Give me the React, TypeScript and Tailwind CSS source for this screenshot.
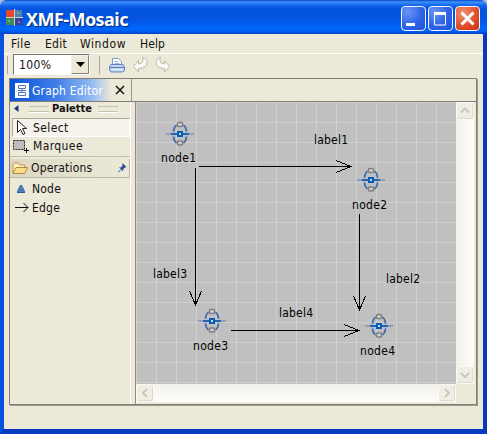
import React from "react";

const GRID =
  "bg-[#c0c0c0] bg-[linear-gradient(to_right,#cfcfcf_1px,transparent_1px),linear-gradient(to_bottom,#cfcfcf_1px,transparent_1px)] bg-[size:20px_20px]";

function CaptionButton({ kind }: { kind: "min" | "max" | "close" }) {
  const tone =
    kind === "close"
      ? "bg-[radial-gradient(circle_at_30%_25%,#ee9172,#e2512b_55%,#c5300c)]"
      : "bg-[radial-gradient(circle_at_25%_20%,#6a95f3,#2f63e6_55%,#1c54e0)]";
  return (
    <div className={`h-[25px] w-[25px] shrink-0 rounded-[4px] border border-[#f3f6ff] ${tone}`}>
      <svg width="23" height="23" viewBox="0 0 23 23" fill="none" stroke="#fff">
        {kind === "min" && <path d="M4 17.5h9" strokeWidth="3" />}
        {kind === "max" && (
          <>
            <path d="M5.5 6v12h11V6" strokeWidth="1" />
            <path d="M5 6.5h12" strokeWidth="3" />
          </>
        )}
        {kind === "close" && <path d="M5.5 5.5l12 12M17.5 5.5l-12 12" strokeWidth="3" />}
      </svg>
    </div>
  );
}

function TitleBar() {
  return (
    <div className="flex h-[34px] shrink-0 items-start rounded-t-[7px] bg-[linear-gradient(to_bottom,#0b47c8_0px,#3c92fb_2px,#1668ee_5px,#0254df_9px,#0355e2_20px,#0066fc_28px,#0061f5_31px,#003dc4_34px)] pl-[6px] pr-[7px] pt-[6px]">
      <svg width="17" height="17" viewBox="0 0 17 17" className="mt-[3px] shrink-0">
        <path d="M0 1h8v7H0z" fill="#e8452c" />
        <path d="M9 1h7v7H9z" fill="#4d82a8" />
        <path d="M0 9h8v7H0z" fill="#3d8c50" />
        <path d="M9 9h7v7H9z" fill="#3d3b92" />
        <path d="M8.500 0v17M0 8.500h17" stroke="#c3d4e0" />
        <path d="M11 3h2v2h-2zM2 11h2v2H2zM12 12h2v2h-2z" fill="#9dbbd0" opacity=".6" />
      </svg>
      <div className="ml-[3px] mt-[1px] grow whitespace-nowrap font-['Noto_Sans',sans-serif] text-[18px] font-bold leading-[25px] tracking-[-0.55px] text-white [text-shadow:1px_1px_1px_#0a2a7a]">
        XMF-Mosaic
      </div>
      <div className="flex gap-[2px]">
        <CaptionButton kind="min" />
        <CaptionButton kind="max" />
        <CaptionButton kind="close" />
      </div>
    </div>
  );
}

function MenuBar() {
  return (
    <div className="flex h-[20px] shrink-0 border-b border-white pl-[7px] pt-px leading-[19px]">
      <span className="w-[34px] tracking-[0.5px]">File</span>
      <span className="w-[35px] tracking-[0.3px]">Edit</span>
      <span className="w-[60px] tracking-[0.6px]">Window</span>
      <span className="tracking-[0.1px]">Help</span>
    </div>
  );
}

function Toolbar() {
  return (
    <div className="flex h-[24px] shrink-0 items-start pl-[2px]">
      <div className="mt-[2px] h-[18px] w-[2px] border-r border-[#aca899]" />
      <div className="ml-[5px] flex h-[21px] w-[77px] border border-r-white border-b-white border-l-[#77756c] border-t-[#77756c] bg-white">
        <span className="grow pl-[5px] pt-px leading-[19px] tracking-[0.35px]">100%</span>
        <div className="flex h-[19px] w-[18px] items-center justify-center border border-b-[#85837a] border-l-[#f1efe2] border-r-[#85837a] border-t-[#f1efe2] bg-[#ece9d8]">
          <svg width="9" height="5" viewBox="0 0 9 5">
            <path d="M0 0h9L4.500 5z" fill="#000" />
          </svg>
        </div>
      </div>
      <div className="ml-[8px] mt-[2px] h-[18px] w-[2px] border-r border-[#aca899]" />
      <svg width="64" height="22" viewBox="0 0 64 22" className="ml-[7px]">
        <path d="M5.500 11V4.500h6l3 3V11" fill="#fff" stroke="#7f9ccd" />
        <path d="M7.500 7.500h4M7.500 9.500h5" stroke="#9fb6dc" />
        <path d="M4 10.500h12l1.500 2.500v3.500l-1.500 1.500H4l-1.500-1.500V13z" fill="#c3d4f0" stroke="#6585c2" />
        <path d="M3 13.500h14" stroke="#5f80bf" />
        <path d="M5 15.500h10" stroke="#eef3fc" />
        <path d="M26.500 12.500l5-6v3.500q4 0 4.500-3.500.3-2-.5-3.500 4.500 1.500 4.500 5.500 0 5.500-8.500 6v3.500z" fill="#fbfaf6" stroke="#bdbaae" />
        <path d="M62.500 12.500l-5-6v3.500q-4 0-4.500-3.500-.3-2 .5-3.500-4.500 1.500-4.500 5.500 0 5.500 8.500 6v3.500z" fill="#fbfaf6" stroke="#bdbaae" />
      </svg>
    </div>
  );
}

function TabStrip() {
  return (
    <div className="flex h-[23px] shrink-0 border-b border-[#807e75]">
      <div className="flex w-[122px] border-r border-[#9a978b]">
        <div className="flex w-[101px] items-center bg-[linear-gradient(to_right,#0754dc_0%,#3d7ee7_45%,#91b9f3_80%,#ece9d8_100%)] pl-[5px] text-white">
          <svg width="14" height="15" viewBox="0 0 14 15" className="shrink-0">
            <path d="M0 0h14v15H0z" fill="#fff" />
            <path d="M3.500 2.500h7v3h-7zM3.500 9.500h7v3h-7zM7 5.500v4M3 7.500h8" fill="none" stroke="#5577b4" />
          </svg>
          <span className="ml-[3px] mt-px whitespace-nowrap tracking-[0.2px]">Graph Editor</span>
        </div>
        <svg width="10" height="10" viewBox="0 0 10 10" className="ml-[4px] mt-[6px]">
          <path d="M1 1l8 8M9 1l-8 8" stroke="#111" strokeWidth="1.500" />
        </svg>
      </div>
    </div>
  );
}

function TitleRules() {
  return <div className="h-[6px] w-[20px] border-y border-[#c6c2b0] shadow-[0_1px_0_#fff]" />;
}

function Palette() {
  return (
    <div className="flex w-[121px] shrink-0 flex-col border-r border-white tracking-[0.2px]">
      <div className="flex h-[14px] shrink-0 items-center pl-[4px]">
        <svg width="5" height="7" viewBox="0 0 5 7" className="-mt-px">
          <path d="M4.500 0v7L0 3.500z" fill="#17347a" />
        </svg>
        <div className="ml-[10px] flex items-center gap-[3px]">
          <TitleRules />
          <span className="w-[43px] text-[11px] font-bold leading-[14px] tracking-[0px]">Palette</span>
          <TitleRules />
        </div>
      </div>
      <div className="ml-[2px] mt-[2px] flex h-[19px] w-[118px] shrink-0 items-center border border-b-white border-l-[#aca899] border-r-white border-t-[#aca899] bg-[#f5f3eb] pl-[3px]">
        <svg width="13" height="17" viewBox="0 0 13 17">
          <path d="M1.500 1.500v12l3-3 2.500 5 2-1-2.500-5h4z" fill="#fff" stroke="#222" />
        </svg>
        <span className="ml-[4px] mt-px tracking-[0.4px]">Select</span>
      </div>
      <div className="flex h-[20px] shrink-0 items-center border-b border-[#c3bfaf] pb-[2px] pl-[2px]">
        <svg width="18" height="16" viewBox="0 0 18 16">
          <path d="M1.500 2.500h11v9h-11z" fill="#bdbdbd" stroke="#222" strokeDasharray="2 1" />
          <path d="M12 12.500h5M14.500 10v5" stroke="#111" />
        </svg>
        <span className="ml-[3px] mt-px tracking-[0.4px]">Marquee</span>
      </div>
      <div className="mt-[2px] flex h-[19px] w-[120px] shrink-0 items-center border-b border-r border-[#bbb7a6] bg-[linear-gradient(to_right,#dcd7c3,#ece9d8)] pl-[2px]">
        <svg width="17" height="13" viewBox="0 0 17 13">
          <path d="M1 11.500V2.500l1.500-1.500h4l1 2h5v3" fill="#fff0bb" stroke="#c09448" />
          <path d="M1 11.500l3-6h11.500l-3 6z" fill="#ffdc88" stroke="#b8893c" />
        </svg>
        <span className="ml-[2px] grow">Operations</span>
        <svg width="9" height="10" viewBox="0 0 9 10" className="mr-[2px]">
          <path d="M4.500 0l4 4-1.500.5-2 2 .2 2L1 4.200l2 .2 1.500-2z" fill="#294c91" />
          <path d="M3 6.500l-3 3" stroke="#294c91" />
        </svg>
      </div>
      <div className="mt-px flex h-[19px] shrink-0 items-center pl-[7px]">
        <svg width="8" height="8" viewBox="0 0 8 8">
          <path d="M3 0h2l3 6v2H0V6z" fill="#477fb3" />
          <path d="M0 7.500h8" stroke="#285e92" />
        </svg>
        <span className="ml-[7px]">Node</span>
      </div>
      <div className="flex h-[19px] shrink-0 items-center pl-[5px]">
        <svg width="14" height="11" viewBox="0 0 14 11">
          <path d="M0 5.500h13M8.500 1l4.500 4.500-4.500 4.500" fill="none" stroke="#111" />
        </svg>
        <span className="ml-[3px]">Edge</span>
      </div>
    </div>
  );
}

const nodes = [
  { name: "node1", x: 180, y: 133.5, tx: 161, ty: 162 },
  { name: "node2", x: 371, y: 179.5, tx: 352, ty: 209 },
  { name: "node3", x: 212, y: 320.5, tx: 193, ty: 350 },
  { name: "node4", x: 379, y: 325.5, tx: 360, ty: 355 },
];

const labels = [
  { name: "label1", x: 314, y: 144 },
  { name: "label2", x: 386, y: 283 },
  { name: "label3", x: 153, y: 278 },
  { name: "label4", x: 279, y: 317 },
];

const edges = [
  "M199 166.500H351M336 160.500L351 166.500L336 172.500",
  "M195.500 168V305M189.500 291L195.500 305L201.500 291",
  "M359.500 214V310M353.500 296L359.500 310L365.500 296",
  "M231 330.500H359M344 324.500L359 330.500L344 336.500",
];

function Diagram() {
  return (
    <svg width="320" height="282" viewBox="136 102 320 282" className={`block ${GRID}`}>
      {nodes.map((n) => (
        <g key={n.name}>
          <g transform={`translate(${n.x} ${n.y})`} fill="none">
            <ellipse rx="6.500" ry="9.500" cy=".5" stroke="#a9bad6" strokeWidth="2.500" />
            <path
              d="M-3.500-8.500Q-6.500-6-6.500-2M3.500-8.500Q6.500-6 6.500-2M-3.500 9.500Q-6.500 7-6.500 3M3.500 9.500Q6.500 7 6.500 3"
              stroke="#3f659f"
              strokeWidth="1.500"
            />
            <path d="M-14 .5H14" stroke="#5d7fb8" strokeWidth="1" />
            <path d="M-9 .5H9" stroke="#2f62ad" strokeWidth="2" />
            <rect x="-3" y="-2.500" width="6" height="6" fill="#075db1" />
            <rect x="-1" y="-.5" width="2" height="2" fill="#b9e0ff" />
            <rect x="-2.500" y="-11" width="5" height="4" rx="1" fill="#d5cfcd" stroke="#837d7d" strokeWidth="1.500" />
            <rect x="-2.500" y="7.500" width="5" height="4" rx="1" fill="#d5cfcd" stroke="#837d7d" strokeWidth="1.500" />
          </g>
          <text x={n.tx} y={n.ty} textLength="35">{n.name}</text>
        </g>
      ))}
      {labels.map((l) => (
        <text key={l.name} x={l.x} y={l.y} textLength="34">{l.name}</text>
      ))}
      {edges.map((d) => (
        <path key={d} d={d} fill="none" stroke="#000" shapeRendering="crispEdges" />
      ))}
    </svg>
  );
}

const chevrons = {
  up: "M4 9.500l4-4 4 4",
  down: "M4 6l4 4 4-4",
  left: "M10 4l-4 4 4 4",
  right: "M6 4l4 4-4 4",
};

function ScrollButton({ dir }: { dir: keyof typeof chevrons }) {
  return (
    <div className="h-[18px] w-[18px] shrink-0 rounded-[2px] border border-[#fbfaf5] bg-[#efede4] shadow-[inset_-1px_-1px_0_#dedbce]">
      <svg width="16" height="16" viewBox="0 0 16 16">
        <path d={chevrons[dir]} fill="none" stroke="#c9c7be" strokeWidth="2" />
      </svg>
    </div>
  );
}

function Editor() {
  return (
    <div className="flex h-[327px] w-[468px] shrink-0 flex-col border border-[#807e75] shadow-[1px_1px_0_#9d9b90]">
      <TabStrip />
      <div className="flex min-h-0 grow">
        <Palette />
        <div className="ml-[4px] grid grid-cols-[320px_18px] grid-rows-[282px_18px] border-l border-[#8d8b83]">
          <Diagram />
          <div className="flex flex-col justify-between bg-[linear-gradient(to_right,#f3f1ec,#fefdfb)]">
            <ScrollButton dir="up" />
            <ScrollButton dir="down" />
          </div>
          <div className="flex justify-between bg-[linear-gradient(to_bottom,#f3f1ec,#fefdfb)]">
            <ScrollButton dir="left" />
            <ScrollButton dir="right" />
          </div>
        </div>
      </div>
    </div>
  );
}

export default function App() {
  return (
    <div className="h-[434px] w-[487px] overflow-hidden bg-[#a9bce0] font-['DejaVu_Sans_Condensed','DejaVu_Sans',sans-serif] text-[12px] leading-[16px] text-[#111]">
      <div className="flex h-full flex-col overflow-hidden rounded-t-[7px] bg-[#0b48d5]">
        <TitleBar />
        <div className="flex grow flex-col border-x-4 border-b-[5px] border-b-[#063bc4] border-l-[#0a50e0] border-r-[#0838bc] bg-[#ece9d8]">
          <MenuBar />
          <Toolbar />
          <div className="pl-[5px]">
            <Editor />
          </div>
        </div>
      </div>
    </div>
  );
}
